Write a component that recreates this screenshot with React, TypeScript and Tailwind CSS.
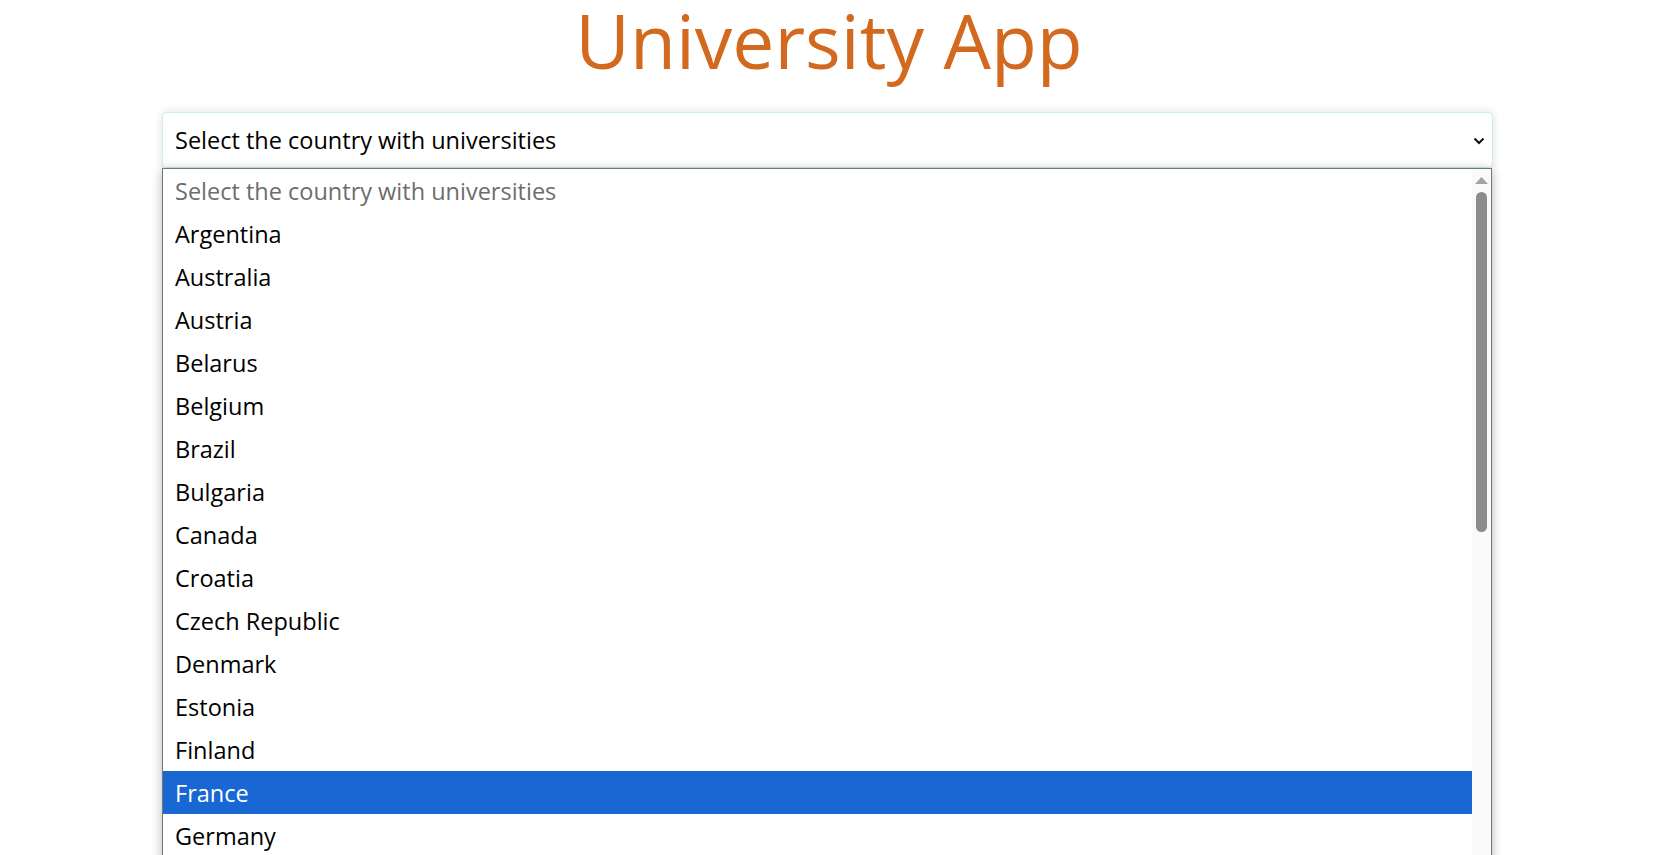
import { useState } from "react";

const countries = [
  "Argentina",
  "Australia",
  "Austria",
  "Belarus",
  "Belgium",
  "Brazil",
  "Bulgaria",
  "Canada",
  "Croatia",
  "Czech Republic",
  "Denmark",
  "Estonia",
  "Finland",
  "France",
  "Germany",
  "Greece",
  "Hungary",
  "India",
];

export default function App() {
  const [selected, setSelected] = useState("France");

  return (
    <div className="h-[855px] overflow-hidden bg-white font-['Open_Sans',sans-serif] text-black">
      <h1 className="text-center text-[75px] font-normal leading-[80px] text-[#d2691e]">
        University App
      </h1>

      <div className="relative ml-[162px] mt-[32px] w-[1331px]">
        {/* closed select */}
        <div className="flex h-[56px] items-center justify-between rounded-[4px] border border-[#cdeef0] bg-white pl-[12px] pr-[6px] pt-[2px] text-[23.5px] shadow-[0_0_10px_rgba(0,0,0,0.12)]">
          <span>Select the country with universities</span>
          <svg width="12" height="8" viewBox="0 0 12 8" className="mr-[1px]">
            <path d="M1.5 1.5 L6 6 L10.5 1.5" fill="none" stroke="#111" strokeWidth="2" />
          </svg>
        </div>

        {/* open dropdown */}
        <div className="absolute left-0 top-[56px] flex h-[870px] w-[1330px] border border-[#767676] bg-white shadow-[0_2px_10px_rgba(0,0,0,0.3)]">
          <ul className="flex-1 text-[23.5px]">
            <li className="flex h-[43px] items-center pl-[12px] pt-[3px] text-[#6d6d6d]">
              Select the country with universities
            </li>
            {countries.map((c) => (
              <li
                key={c}
                onClick={() => setSelected(c)}
                className={
                  c === selected
                    ? "flex h-[43px] items-center bg-[#1967d2] pl-[12px] pt-[3px] text-white"
                    : "flex h-[43px] items-center pl-[12px] pt-[3px]"
                }
              >
                {c}
              </li>
            ))}
          </ul>
          {/* scrollbar */}
          <div className="flex w-[19px] flex-col items-center bg-[#fafafa] pt-[8px]">
            <svg width="13" height="7" viewBox="0 0 13 7">
              <path d="M6.5 0 L13 7 L0 7 Z" fill="#a3a3a3" />
            </svg>
            <div className="mt-[8px] h-[340px] w-[11px] rounded-full bg-[#8c8c8c]" />
          </div>
        </div>
      </div>
    </div>
  );
}
